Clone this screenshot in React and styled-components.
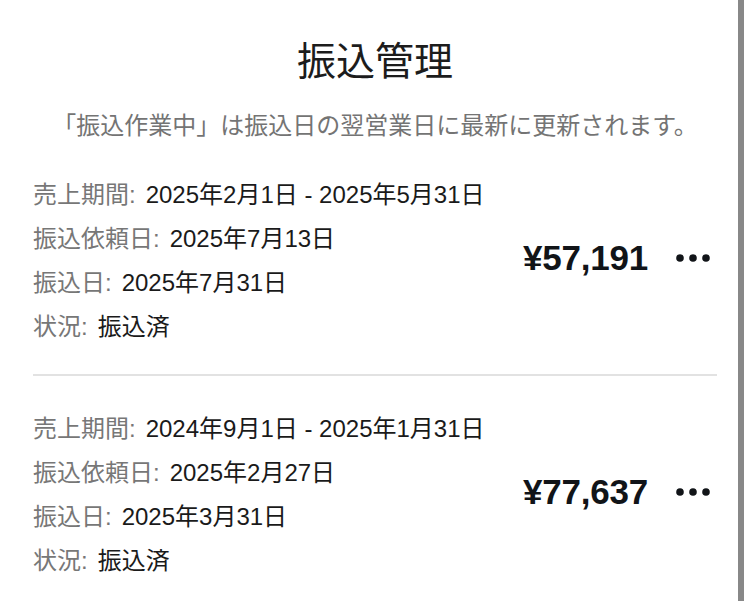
import React from "react";
import styled, { createGlobalStyle } from "styled-components";

const GlobalStyle = createGlobalStyle`
  html, body { margin: 0; padding: 0; background: #ffffff; }
  body {
    font-family: "Liberation Sans", "Noto Sans CJK JP", sans-serif;
    color: #1a1a1a;
  }
`;

const Page = styled.div`
  width: 750px;
  min-height: 601px;
  box-sizing: border-box;
  padding: 34px 33px 0 33px;
  background: #ffffff;
`;

const ScrollBar = styled.div`
  position: fixed;
  top: 0;
  left: 738px;
  width: 6px;
  height: 100vh;
  background: #888888;
`;

const Header = styled.header`
  display: flex;
  flex-direction: column;
  align-items: center;
`;

const Title = styled.h1`
  margin: 0;
  font-family: "Noto Sans CJK JP", sans-serif;
  font-weight: 400;
  font-size: 39px;
  line-height: 48px;
  color: #1c1c1c;
`;

const Note = styled.p`
  margin: 26px 0 2px;
  font-family: "Noto Sans CJK JP", sans-serif;
  font-size: 24px;
  line-height: 32px;
  color: #747474;
  white-space: nowrap;
`;

const List = styled.div`
  display: flex;
  flex-direction: column;
`;

const Item = styled.section`
  display: flex;
  align-items: center;
  padding: 28px 0;
  border-top: ${(p) => (p.$first ? "none" : "2px solid #e2e2e2")};
`;

const Details = styled.div`
  flex: 1;
  display: flex;
  flex-direction: column;
`;

const Row = styled.div`
  display: flex;
  align-items: center;
  gap: 10px;
  height: 44px;
  font-size: 24px;
  white-space: nowrap;
`;

const Label = styled.span`
  color: #777777;
`;

const Value = styled.span`
  color: #1a1a1a;
`;

const Side = styled.div`
  display: flex;
  align-items: center;
  gap: 28px;
  padding-right: 7px;
`;

const Amount = styled.div`
  font-family: "Liberation Sans", sans-serif;
  font-weight: 700;
  font-size: 35px;
  color: #111418;
  letter-spacing: -0.2px;
`;

const MoreButton = styled.button`
  display: flex;
  align-items: center;
  justify-content: center;
  padding: 0;
  border: none;
  background: none;
  cursor: pointer;
  color: #111418;
`;

const Dots = () => (
  <svg width="34" height="10" viewBox="0 0 34 10" aria-hidden="true">
    <circle cx="4" cy="5" r="3.8" fill="currentColor" />
    <circle cx="17" cy="5" r="3.8" fill="currentColor" />
    <circle cx="30" cy="5" r="3.8" fill="currentColor" />
  </svg>
);

const transfers = [
  {
    period: "2025年2月1日 - 2025年5月31日",
    requested: "2025年7月13日",
    date: "2025年7月31日",
    status: "振込済",
    amount: "¥57,191",
  },
  {
    period: "2024年9月1日 - 2025年1月31日",
    requested: "2025年2月27日",
    date: "2025年3月31日",
    status: "振込済",
    amount: "¥77,637",
  },
];

export default function App() {
  return (
    <>
      <GlobalStyle />
      <Page>
        <Header>
          <Title>振込管理</Title>
          <Note>「振込作業中」は振込日の翌営業日に最新に更新されます。</Note>
        </Header>
        <List>
          {transfers.map((t, i) => (
            <Item key={i} $first={i === 0}>
              <Details>
                <Row>
                  <Label>売上期間:</Label>
                  <Value>{t.period}</Value>
                </Row>
                <Row>
                  <Label>振込依頼日:</Label>
                  <Value>{t.requested}</Value>
                </Row>
                <Row>
                  <Label>振込日:</Label>
                  <Value>{t.date}</Value>
                </Row>
                <Row>
                  <Label>状況:</Label>
                  <Value>{t.status}</Value>
                </Row>
              </Details>
              <Side>
                <Amount>{t.amount}</Amount>
                <MoreButton aria-label="more">
                  <Dots />
                </MoreButton>
              </Side>
            </Item>
          ))}
        </List>
      </Page>
      <ScrollBar />
    </>
  );
}
